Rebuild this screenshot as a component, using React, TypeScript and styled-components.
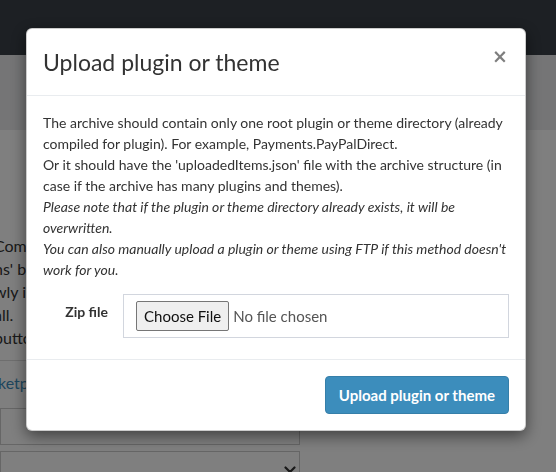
import React from 'react';
import styled, { createGlobalStyle } from 'styled-components';

const GlobalStyle = createGlobalStyle`
  html, body {
    margin: 0;
    padding: 0;
  }
  body {
    font-family: Lato, "Open Sans", "Noto Sans", sans-serif;
    font-size: 14px;
    color: #333;
    overflow: hidden;
  }
  * {
    box-sizing: border-box;
  }
`;

const Page = styled.div`
  height: 472px;
  background: #fff;
  overflow: hidden;
`;

const Navbar = styled.div`
  height: 55px;
  background: #3a4048;
`;

const ContentHeader = styled.div`
  height: 75px;
  background: #eaebed;
`;

const Content = styled.div`
  display: grid;
  grid-template-columns: 300px 1fr;
`;

const MainColumn = styled.div`
  padding-top: 104px;
  overflow: hidden;
`;

const IntroText = styled.div`
  margin-left: -6px;
  font-size: 16px;
  line-height: 23px;
  color: #333;
  white-space: nowrap;
`;

const Link = styled.a`
  color: #3c8dbc;
  text-decoration: none;
`;

const Rule = styled.hr`
  margin: 11px 0 10px;
  border: 0;
  border-top: 1px solid #ddd;
`;

const LinkLine = styled.div`
  margin-left: -2px;
  font-size: 16px;
  line-height: 23px;
`;

const FieldBox = styled.div<{ $gap: number }>`
  height: 37px;
  margin-top: ${p => p.$gap}px;
  border: 1px solid #ccc;
  display: flex;
  align-items: flex-start;
  justify-content: flex-end;
  padding: 14px 3px 0 0;
`;

const Backdrop = styled.div`
  position: fixed;
  inset: 0;
  background: rgba(0, 0, 0, 0.5);
`;

const ModalLayer = styled.div`
  position: fixed;
  inset: 0;
`;

const Dialog = styled.div`
  width: 500px;
  margin: 28px 0 0 26px;
  background: #fff;
  border: 1px solid rgba(0, 0, 0, 0.2);
  border-radius: 6px;
  box-shadow: 0 5px 15px rgba(0, 0, 0, 0.5);
`;

const Header = styled.div`
  display: flex;
  align-items: flex-start;
  justify-content: space-between;
  padding: 16px;
  border-bottom: 1px solid #e9ecef;
`;

const Title = styled.h4`
  margin: 0;
  font-size: 23px;
  line-height: 34px;
  font-weight: 400;
  color: #333;
`;

const Close = styled.button`
  border: 0;
  background: transparent;
  padding: 0;
  margin: 1px 1px 0 0;
  font-family: "DejaVu Sans", sans-serif;
  font-size: 19px;
  line-height: 20px;
  font-weight: 700;
  color: #000;
  opacity: 0.5;
  cursor: pointer;
`;

const Body = styled.div`
  padding: 16px 16px 21px;
`;

const Info = styled.p`
  margin: 0 0 14px;
  line-height: 21px;
`;

const FormRow = styled.div`
  display: grid;
  grid-template-columns: 80px 1fr;
`;

const Label = styled.label`
  padding: 7px 15px 0 0;
  text-align: right;
  font-weight: 700;
  line-height: 21px;
`;

const FileInput = styled.input`
  display: block;
  width: 100%;
  height: 44px;
  padding: 6px 12px;
  border: 1px solid #d2d6de;
  font-family: inherit;
  font-size: 15px;
  color: #555;

  &::file-selector-button {
    height: 30px;
    margin-right: 4px;
    padding: 0 7px;
    border: 1px solid #767676;
    border-radius: 2px;
    background: #efefef;
    font-family: inherit;
    font-size: 15px;
    color: #111;
  }
`;

const Footer = styled.div`
  display: flex;
  justify-content: flex-end;
  padding: 16px;
  border-top: 1px solid #e9ecef;
`;

const PrimaryButton = styled.button`
  height: 38px;
  padding: 0 13px;
  border: 1px solid #367fa9;
  border-radius: 4px;
  background: #3c8dbc;
  color: #fff;
  font-family: inherit;
  font-size: 15px;
  font-weight: 700;
  cursor: pointer;
`;

const ChevronDown: React.FC = () => (
  <svg width="12" height="8" viewBox="0 0 12 8" aria-hidden="true">
    <path d="M1.5 1.5 L6 6 L10.5 1.5" fill="none" stroke="#333" strokeWidth="2.2" strokeLinecap="round" />
  </svg>
);

const App: React.FC = () => {
  return (
    <>
      <GlobalStyle />
      <Page>
        <Navbar />
        <ContentHeader />
        <Content>
          <MainColumn>
            <IntroText>Commands</IntroText>
            <IntroText>ns' b</IntroText>
            <IntroText>wly i</IntroText>
            <IntroText>all.</IntroText>
            <IntroText>button</IntroText>
            <Rule />
            <LinkLine>
              <Link href="#">ketplace</Link>
            </LinkLine>
            <FieldBox $gap={14} />
            <FieldBox $gap={6}>
              <ChevronDown />
            </FieldBox>
          </MainColumn>
          <div />
        </Content>
      </Page>
      <Backdrop />
      <ModalLayer>
        <Dialog role="dialog">
          <Header>
            <Title>Upload plugin or theme</Title>
            <Close aria-label="Close">×</Close>
          </Header>
          <Body>
            <Info>
              The archive should contain only one root plugin or theme directory (already compiled for plugin). For
              example, Payments.PayPalDirect.
              <br />
              Or it should have the 'uploadedItems.json' file with the archive structure (in case if the archive has
              many plugins and themes).
              <br />
              <em>Please note that if the plugin or theme directory already exists, it will be overwritten.</em>
              <br />
              <em>You can also manually upload a plugin or theme using FTP if this method doesn't work for you.</em>
            </Info>
            <FormRow>
              <Label htmlFor="zip">Zip file</Label>
              <FileInput id="zip" type="file" accept=".zip" />
            </FormRow>
          </Body>
          <Footer>
            <PrimaryButton>Upload plugin or theme</PrimaryButton>
          </Footer>
        </Dialog>
      </ModalLayer>
    </>
  );
};

export default App;
